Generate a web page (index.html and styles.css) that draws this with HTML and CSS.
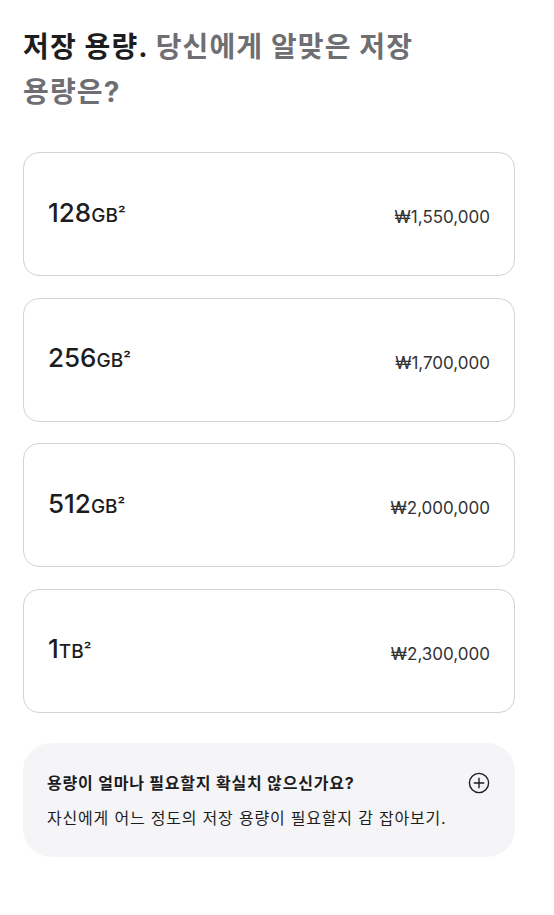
FILE: index.html
```html
<!DOCTYPE html>
<html lang="ko">
<head>
  <meta charset="UTF-8" />
  <meta name="viewport" content="width=device-width, initial-scale=1.0"/>
  <title>저장 용량</title>
  <link rel="stylesheet" href="styles.css">
</head>
<body>

  <div class="content">
    <h1 class="title">
      <span class="title-strong">저장 용량.</span>
      당신에게 알맞은 저장 용량은?
    </h1>

    <div class="options">
      <div class="option">
        <span class="capacity">128<span class="unit">GB</span><span class="note">²</span></span>
        <span class="price">₩1,550,000</span>
      </div>
      <div class="option">
        <span class="capacity">256<span class="unit">GB</span><span class="note">²</span></span>
        <span class="price">₩1,700,000</span>
      </div>
      <div class="option">
        <span class="capacity">512<span class="unit">GB</span><span class="note">²</span></span>
        <span class="price">₩2,000,000</span>
      </div>
      <div class="option">
        <span class="capacity">1<span class="unit">TB</span><span class="note">²</span></span>
        <span class="price">₩2,300,000</span>
      </div>
    </div>

    <div class="help-box">
      <div class="help-head">
        <p class="help-title">용량이 얼마나 필요할지 확실치 않으신가요?</p>
        <svg class="plus-icon" width="22" height="22" viewBox="0 0 22 22">
          <circle cx="11" cy="11" r="9.6" fill="none" stroke="#1d1d1f" stroke-width="1.4"/>
          <path d="M11 6.2v9.6M6.2 11h9.6" stroke="#1d1d1f" stroke-width="1.4" stroke-linecap="round"/>
        </svg>
      </div>
      <p class="help-text">자신에게 어느 정도의 저장 용량이 필요할지 감 잡아보기.</p>
    </div>
  </div>

</body>
</html>
```

FILE: styles.css
```css
* {
  margin: 0;
  padding: 0;
  box-sizing: border-box;
}

body {
  font-family: Inter, "Noto Sans CJK KR", sans-serif;
  background: #fff;
  color: #1d1d1f;
  word-break: keep-all;
}

.content {
  width: 492px;
  margin-left: 23px;
  padding-top: 25px;
}

.title {
  font-size: 28px;
  line-height: 45px;
  font-weight: 700;
  letter-spacing: 0.04em;
  color: #6e6e73;
  margin-bottom: 37px;
}

.title-strong {
  color: #1d1d1f;
}

/* storage cards */
.options {
  display: flex;
  flex-direction: column;
  gap: 21.5px;
}

.option {
  height: 124px;
  border: 1px solid #d2d2d7;
  border-radius: 16px;
  padding: 0 24px;
  display: flex;
  justify-content: space-between;
  align-items: center;
}

.capacity {
  font-size: 26px;
  font-weight: 500;
  line-height: 34px;
  color: #1d1d1f;
}

.unit {
  font-size: 19px;
}

.note {
  font-size: 17px;
  position: relative;
  top: -2px;
}

.price {
  font-size: 17px;
  color: #333336;
  position: relative;
  top: 3px;
}

/* help box */
.help-box {
  margin-top: 30px;
  background: #f5f5f7;
  border-radius: 28px;
  padding: 28px 24px 27px;
  height: 114px;
}

.help-head {
  display: flex;
  justify-content: space-between;
  align-items: center;
}

.help-title {
  font-size: 16px;
  font-weight: 700;
  line-height: 24px;
  letter-spacing: 0.05em;
}

.plus-icon {
  margin-right: 1px;
}

.help-text {
  margin-top: 11px;
  font-size: 16px;
  line-height: 24px;
  letter-spacing: 0.05em;
  color: #1d1d1f;
}
```
